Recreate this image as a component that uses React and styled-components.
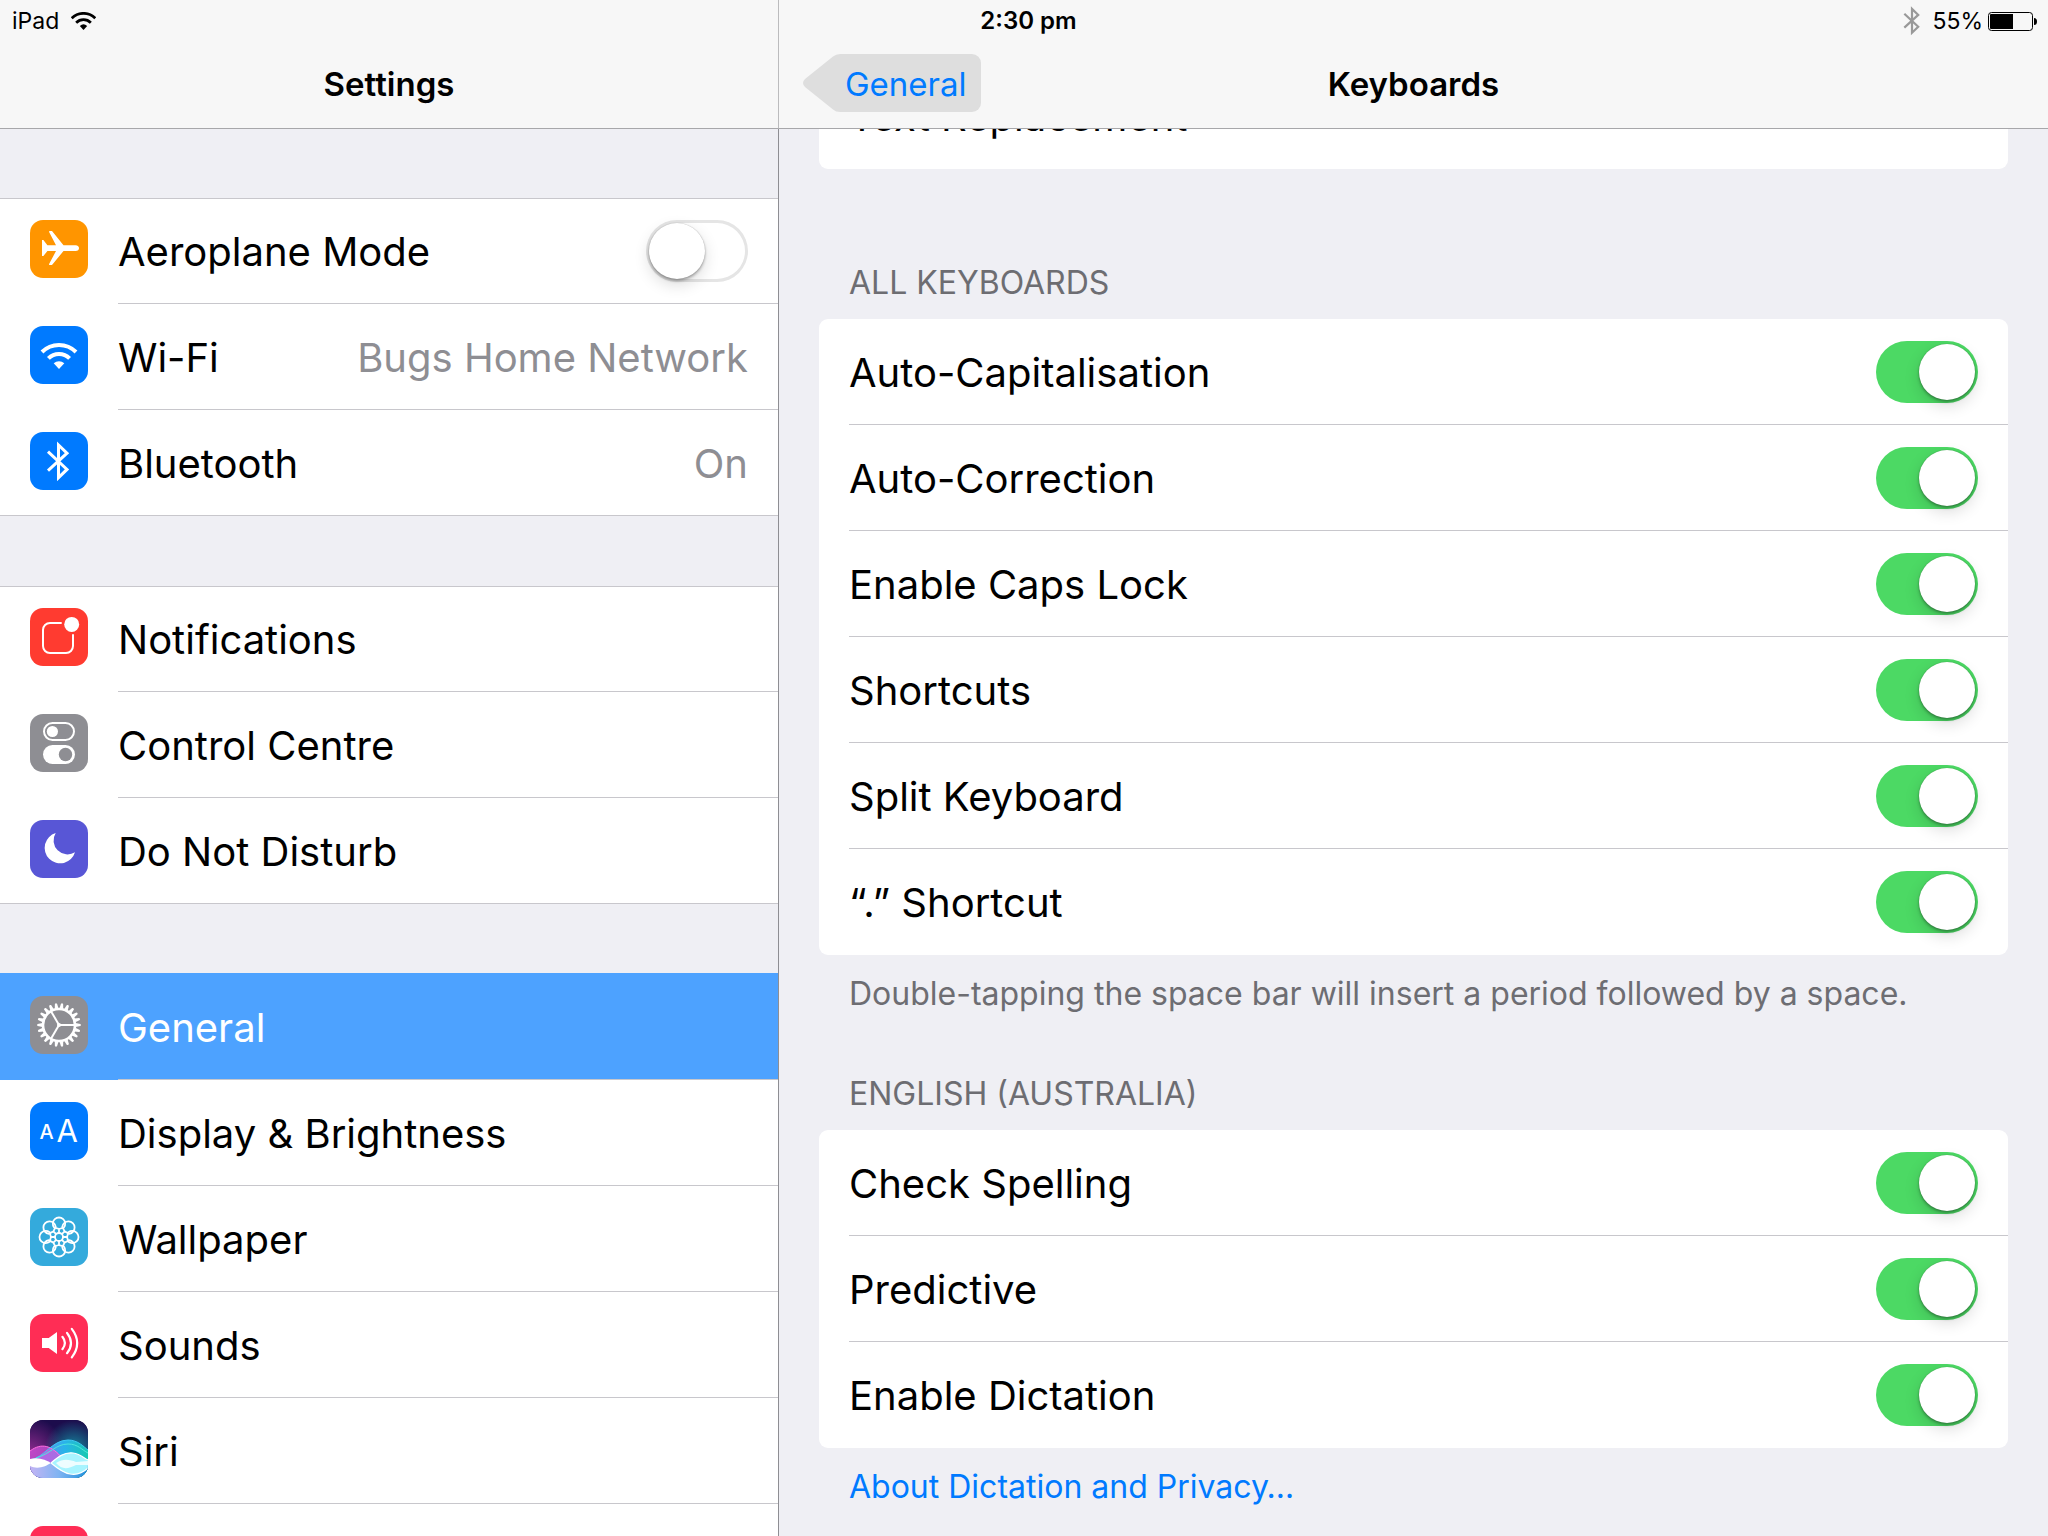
import React, { useState } from 'react'
import styled, { createGlobalStyle, css, ThemeProvider } from 'styled-components'

const theme = {
  page: '#efeff4',
  bar: '#f7f7f7',
  card: '#ffffff',
  line: '#c8c7cc',
  barLine: '#a7a7aa',
  tint: '#007aff',
  muted: '#8e8e93',
  caption: '#6d6d72',
  on: '#4cd964',
  selected: '#4da2ff',
}

const GlobalStyle = createGlobalStyle`
  * {
    box-sizing: border-box;
  }

  body {
    margin: 0;
    background: ${theme.page};
    font-family: Inter, 'Liberation Sans', sans-serif;
    color: #000;
  }

  h1, h2, p {
    margin: 0;
    font-weight: 400;
  }

  button {
    font: inherit;
    color: inherit;
    background: none;
    border: none;
    padding: 0;
    cursor: pointer;
  }
`

const Screen = styled.div`
  position: relative;
  display: grid;
  grid-template-columns: 779fr 1269fr;
  height: 100vh;
  overflow: hidden;
`

// floats above both navigation bars
const StatusBar = styled.div`
  position: absolute;
  top: 0;
  left: 0;
  right: 0;
  z-index: 1;
  display: grid;
  grid-template-columns: 1fr auto 1fr;
  align-items: center;
  height: 42px;
  padding: 0 11px 0 12px;
  font-size: 23px;
  line-height: 32px;
`

const StatusGroup = styled.div`
  display: flex;
  align-items: center;
  gap: ${props => props.$gap}px;
  justify-content: ${props => props.$end ? 'flex-end' : 'flex-start'};
`

const Clock = styled.div`
  padding-left: 8px;
  font-size: 24px;
  font-weight: 600;
`

const Pane = styled.div`
  display: flex;
  flex-direction: column;
  min-width: 0;
  min-height: 0;
`

const NavBar = styled.header`
  display: grid;
  grid-template-columns: 1fr auto 1fr;
  align-items: center;
  flex: none;
  height: 129px;
  padding: 38px 24px 0;
  background: ${props => props.theme.bar};
  border-bottom: 1px solid ${props => props.theme.barLine};
  font-size: 33px;

  ${props => props.$divided && css`
    border-right: 1px solid #bbbbbd;
  `}
`

const NavTitle = styled.h1`
  grid-column: 2;
  padding-top: 2px;
  font-size: 33px;
  line-height: 40px;
  font-weight: 600;
`

const BackButton = styled.button`
  display: flex;
  justify-self: start;
  height: 58px;
`

const BackArrow = styled.svg`
  display: block;
  width: 38px;
  height: 58px;
  fill: #dedede;
`

const BackLabel = styled.span`
  height: 58px;
  padding: 0 14px 0 4px;
  border-radius: 0 9px 9px 0;
  background: #dedede;
  color: ${props => props.theme.tint};
  line-height: 60px;
`

const SidebarBody = styled.nav`
  display: flex;
  flex-direction: column;
  flex: 1;
  gap: 70px;
  min-height: 0;
  padding-top: 69px;
  overflow: hidden;
  border-right: 1px solid #8e8e93;
`

const SidebarGroup = styled.div`
  flex: none;
  background: ${props => props.theme.card};
  box-shadow: inset 0 1px ${props => props.theme.line}, inset 0 -1px ${props => props.theme.line};
`

const RowBody = styled.span`
  display: flex;
  align-items: center;
  justify-content: space-between;
  flex: 1;
  height: 106px;
  padding-right: 30px;
  font-size: 40px;
  line-height: 48px;
  box-shadow: inset 0 -1px ${props => props.theme.line};
`

const RowText = styled.span`
  padding-top: 2px;

  ${props => props.$muted && css`
    color: ${props.theme.muted};
  `}
`

const rowLayout = css`
  display: flex;
  gap: 30px;
  width: 100%;
  padding-left: 30px;
  text-align: left;

  &:last-child ${RowBody} {
    box-shadow: none;
  }
`

const SidebarRow = styled.button`
  ${rowLayout}
  padding-left: 30px;

  ${props => props.$selected && css`
    background: ${props.theme.selected};
    box-shadow: 0 -1px ${props.theme.selected};
    color: #fff;
  `}
`

const ToggleRow = styled.label`
  ${rowLayout}
  cursor: pointer;
`

const IconTile = styled.svg`
  flex: none;
  display: block;
  width: 58px;
  height: 58px;
  margin-top: 22px;
  border-radius: 13px;
  background: ${props => props.$tile};
  color: #fff;
`

const Switch = styled.input`
  appearance: none;
  flex: none;
  display: flex;
  align-items: center;
  width: 102px;
  height: 62px;
  margin: 0;
  padding: 3px;
  border-radius: 31px;
  background: #fff;
  box-shadow: inset 0 0 0 3px #e5e5e5;
  cursor: pointer;

  &::before {
    content: '';
    width: 56px;
    height: 56px;
    border-radius: 50%;
    background: #fff;
    box-shadow: 0 0 1px rgba(0, 0, 0, 0.3), 0 2px 3px rgba(0, 0, 0, 0.3), 0 6px 16px rgba(0, 0, 0, 0.14);
  }

  &:checked {
    justify-content: flex-end;
    background: ${props => props.theme.on};
    box-shadow: none;
  }
`

const DetailBody = styled.main`
  flex: 1;
  min-height: 0;
  padding: 0 40px;
  overflow: hidden;
`

// list is scrolled part of the way under the bar
const ScrolledList = styled.div`
  margin-top: -66px;
`

const Card = styled.div`
  background: ${props => props.theme.card};
  border-radius: 9px;
`

const CardRow = styled.button`
  ${rowLayout}
  padding-left: 30px;
`

const SectionTitle = styled.h2`
  padding: ${props => props.$first ? 94 : 60}px 30px 16px;
  color: ${props => props.theme.caption};
  font-size: 32px;
  line-height: 40px;
  text-transform: uppercase;
`

const SectionNote = styled.p`
  padding: 19px 30px 0;
  color: ${props => props.theme.caption};
  font-size: 32px;
  line-height: 40px;
`

const NoteLink = styled.a`
  color: ${props => props.theme.tint};
  text-decoration: none;
`

const WifiShape = () => (
  <>
    <path d="M12 26a24 24 0 0 1 34 0M18.4 32.4a15 15 0 0 1 21.2 0" fill="none" stroke="currentColor" strokeWidth="4" />
    <path d="M29 43l-5.3-5.8a8 8 0 0 1 10.6 0z" fill="currentColor" />
  </>
)

const BluetoothShape = () => (
  <path
    d="M18 19.6L37 37.4L28.5 45.6V13L37 21.2L18 38.6"
    fill="none"
    stroke="currentColor"
    strokeWidth="3"
  />
)

const range = n => Array.from({ length: n }, (_, i) => i)

const icons = {
  plane: {
    color: '#ff9500',
    art: (
      <path
        fill="#fff"
        d="M12 20h1.4l4 5.3H26L19.1 12q-.3-1 .7-1H22l11.5 14.3h12Q49 25.8 49 28.2T45.5 31h-12L22 45h-2.2q-1 0-.7-1L26 31h-8.6l-4 5H12z"
      />
    ),
  },
  wifi: { color: '#007aff', art: <WifiShape /> },
  bluetooth: { color: '#007aff', art: <BluetoothShape /> },
  notifications: {
    color: '#ff3b30',
    art: (
      <>
        <path d="M31.7 15H20a7 7 0 0 0-7 7v16a7 7 0 0 0 7 7h16a7 7 0 0 0 7-7V26.3" fill="none" stroke="#fff" strokeWidth="2" />
        <circle cx="41.7" cy="16.4" r="7.5" fill="#fff" />
      </>
    ),
  },
  control: {
    color: '#8e8e93',
    art: (
      <>
        <rect x="14" y="9" width="30" height="17" rx="8.5" fill="none" stroke="#fff" strokeWidth="2" />
        <circle cx="22.4" cy="17.5" r="5.6" fill="#fff" />
        <rect x="13" y="31" width="32" height="19" rx="9.5" fill="#fff" />
        <circle cx="35.5" cy="40.5" r="6.7" fill="#8e8e93" />
      </>
    ),
  },
  moon: {
    color: '#5856d6',
    art: <path d="M25.7 13A15.5 15.5 0 1 0 45 32.3A14 14 0 0 1 25.7 13z" fill="#fff" />,
  },
  gear: {
    color: '#8e8e93',
    art: (
      <g transform="translate(29 29)" fill="none" stroke="#fff">
        <circle r="16" strokeWidth="2.6" />
        {range(22).map(i => (
          <path
            key={i}
            d="M16.5 -1.9L21.4 -1.1Q22.6 0 21.4 1.1L16.5 1.9z"
            fill="#fff"
            stroke="none"
            transform={`rotate(${i * 360 / 22})`}
          />
        ))}
        {[0, 120, 240].map(angle => (
          <path key={angle} d="M0 0H16" strokeWidth="2" transform={`rotate(${angle})`} />
        ))}
        <circle r="2" fill="#fff" stroke="none" />
      </g>
    ),
  },
  display: {
    color: '#007aff',
    art: (
      <g fill="#fff" fontFamily="Inter, sans-serif">
        <text x="9.5" y="37" fontSize="20" fontWeight="500">A</text>
        <text x="26.5" y="40" fontSize="31" fontWeight="400">A</text>
      </g>
    ),
  },
  wallpaper: {
    color: '#34aadc',
    art: (
      <g transform="translate(29 29)" fill="none" stroke="#fff" strokeWidth="1.8">
        <circle r="4" />
        {range(8).map(i => (
          <path
            key={i}
            d="M0 -4V-8L-4.9 -9.5A6.2 6.2 0 1 1 4.9 -9.5L0 -8"
            transform={`rotate(${i * 45})`}
          />
        ))}
      </g>
    ),
  },
  sounds: {
    color: '#ff2d55',
    art: (
      <>
        <path d="M12 24h6.7L27 18v22l-8.3-6H12z" fill="#fff" />
        <path
          d="M32.4 22.8q5 6.2 0 12.4M37 18.8q8 10.3 0 20.4M41.8 14.8q10.8 14.2 0 28.6"
          fill="none"
          stroke="#fff"
          strokeWidth="2.2"
          strokeLinecap="round"
        />
      </>
    ),
  },
  siri: {
    color: '#1b0f4b',
    art: (
      <>
        <defs>
          <radialGradient id="siriPurple" cx="0" cy="0.55" r="0.6">
            <stop offset="0" stopColor="#8a2a8c" />
            <stop offset="1" stopColor="#8a2a8c" stopOpacity="0" />
          </radialGradient>
          <radialGradient id="siriTeal" cx="0.75" cy="0.5" r="0.5">
            <stop offset="0" stopColor="#158aa0" />
            <stop offset="1" stopColor="#158aa0" stopOpacity="0" />
          </radialGradient>
          <linearGradient id="siriWave" x1="0" y1="0" x2="1" y2="0">
            <stop offset="0" stopColor="#7f7bf0" />
            <stop offset="0.6" stopColor="#29b3ea" />
            <stop offset="1" stopColor="#17c9b0" />
          </linearGradient>
          <linearGradient id="siriBase" x1="0" y1="0" x2="1" y2="0">
            <stop offset="0" stopColor="#c3b4f4" />
            <stop offset="0.5" stopColor="#7fb4f2" />
            <stop offset="1" stopColor="#1c8fdc" />
          </linearGradient>
        </defs>
        <rect width="58" height="58" fill="#1c0c4c" />
        <rect width="58" height="58" fill="url(#siriPurple)" />
        <rect width="58" height="58" fill="url(#siriTeal)" />
        <path d="M0 40C14 38 22 20 38 20C48 20 54 27 58 30V58H0z" fill="url(#siriWave)" />
        <path d="M0 31C12 22 22 26 32 37L32 44H0z" fill="#d655e0" opacity="0.7" />
        <path d="M0 43H58V58H0z" fill="url(#siriBase)" />
        <path d="M0 31C12 22 22 26 32 38" fill="none" stroke="#ff6fe0" strokeWidth="1" />
        <path d="M0 40C14 38 22 20 38 20C48 20 54 27 58 30" fill="none" stroke="#3fc8f5" strokeWidth="1" />
        <path d="M6 38C20 34 26 24 38 24C48 24 52 30 58 33" fill="none" stroke="#4fe6dc" strokeWidth="1" />
        <path d="M0 39C9 37 16 40 21 43C16 46 8 50 0 46z" fill="#fff" />
        <path d="M21 43C28 37 34 32 43 33C50 34 54 38 58 40V48C52 54 46 55 40 54C33 53 27 48 21 43z" fill="#a8f4ff" />
        <path d="M26 43C34 38 40 40 46 42L58 41V45L46 45C38 49 32 50 26 43z" fill="#fff" opacity="0.8" />
        <path
          d="M21 43C28 37 34 32 43 33C50 34 54 38 58 40M21 43C27 48 33 53 40 54C46 55 52 54 58 48"
          fill="none"
          stroke="#fff"
          strokeWidth="1.2"
        />
      </>
    ),
  },
  blank: { color: '#ff2d55', art: null },
}

const Icon = ({ name }) => (
  <IconTile viewBox="0 0 58 58" $tile={icons[name].color} aria-hidden="true">
    {icons[name].art}
  </IconTile>
)

const sidebarGroups = [
  [
    { icon: 'plane', label: 'Aeroplane Mode', toggle: true },
    { icon: 'wifi', label: 'Wi-Fi', value: 'Bugs Home Network' },
    { icon: 'bluetooth', label: 'Bluetooth', value: 'On' },
  ],
  [
    { icon: 'notifications', label: 'Notifications' },
    { icon: 'control', label: 'Control Centre' },
    { icon: 'moon', label: 'Do Not Disturb' },
  ],
  [
    { icon: 'gear', label: 'General' },
    { icon: 'display', label: 'Display & Brightness' },
    { icon: 'wallpaper', label: 'Wallpaper' },
    { icon: 'sounds', label: 'Sounds' },
    { icon: 'siri', label: 'Siri' },
    { icon: 'blank', label: '' },
  ],
]

const allKeyboards = ['Auto-Capitalisation', 'Auto-Correction', 'Enable Caps Lock', 'Shortcuts', 'Split Keyboard', '“.” Shortcut']
const english = ['Check Spelling', 'Predictive', 'Enable Dictation']

const Toggle = ({ label, icon, defaultOn }) => {
  const [on, setOn] = useState(defaultOn)

  return (
    <ToggleRow>
      {icon && <Icon name={icon} />}
      <RowBody>
        <RowText>{label}</RowText>
        <Switch type="checkbox" role="switch" checked={on} onChange={() => setOn(!on)} />
      </RowBody>
    </ToggleRow>
  )
}

const Sidebar = () => {
  const [selected, setSelected] = useState('General')

  return (
    <Pane>
      <NavBar $divided>
        <NavTitle>Settings</NavTitle>
      </NavBar>
      <SidebarBody>
        {sidebarGroups.map((group, i) => (
          <SidebarGroup key={i}>
            {group.map(item => item.toggle ? (
              <Toggle key={item.icon} icon={item.icon} label={item.label} defaultOn={false} />
            ) : (
              <SidebarRow key={item.icon} $selected={item.label === selected} onClick={() => setSelected(item.label)}>
                <Icon name={item.icon} />
                <RowBody>
                  <RowText>{item.label}</RowText>
                  {item.value && <RowText $muted>{item.value}</RowText>}
                </RowBody>
              </SidebarRow>
            ))}
          </SidebarGroup>
        ))}
      </SidebarBody>
    </Pane>
  )
}

const Keyboards = () => (
  <Pane>
    <NavBar>
      <BackButton>
        <BackArrow viewBox="0 0 38 58" aria-hidden="true">
          <path d="M38 0H37Q33 0 30 2.5L2 25Q-2 29 2 33L30 55.5Q33 58 37 58H38z" />
        </BackArrow>
        <BackLabel>General</BackLabel>
      </BackButton>
      <NavTitle>Keyboards</NavTitle>
    </NavBar>
    <DetailBody>
      <ScrolledList>
        <Card>
          <CardRow>
            <RowBody>
              <RowText>Text Replacement</RowText>
            </RowBody>
          </CardRow>
        </Card>

        <SectionTitle $first>All Keyboards</SectionTitle>
        <Card>
          {allKeyboards.map(label => <Toggle key={label} label={label} defaultOn />)}
        </Card>
        <SectionNote>Double-tapping the space bar will insert a period followed by a space.</SectionNote>

        <SectionTitle>English (Australia)</SectionTitle>
        <Card>
          {english.map(label => <Toggle key={label} label={label} defaultOn />)}
        </Card>
        <SectionNote>
          <NoteLink href="#privacy">About Dictation and Privacy…</NoteLink>
        </SectionNote>
      </ScrolledList>
    </DetailBody>
  </Pane>
)

const App = () => (
  <ThemeProvider theme={theme}>
    <GlobalStyle />
    <Screen>
      <StatusBar>
        <StatusGroup $gap={12}>
          iPad
          <svg width="25" height="18" viewBox="11 17 36 26" aria-hidden="true"><WifiShape /></svg>
        </StatusGroup>
        <Clock>2:30 pm</Clock>
        <StatusGroup $gap={5} $end>
          <svg width="30" height="30" viewBox="8 9 41 41" color="#999" aria-hidden="true"><BluetoothShape /></svg>
          55%
          <svg width="49" height="19" viewBox="0 0 49 19" aria-hidden="true">
            <rect x="0.5" y="0.5" width="44" height="18" rx="3" fill="none" stroke="#000" />
            <path d="M3 2H25V17H3Q2 17 2 16V3Q2 2 3 2zM46 6q3 0 3 3.5t-3 3.5z" />
          </svg>
        </StatusGroup>
      </StatusBar>
      <Sidebar />
      <Keyboards />
    </Screen>
  </ThemeProvider>
)

export default App
